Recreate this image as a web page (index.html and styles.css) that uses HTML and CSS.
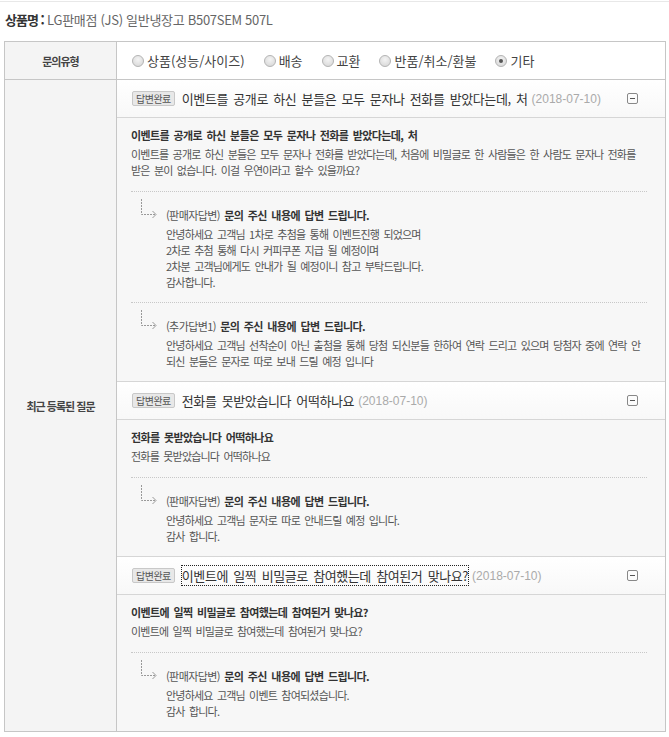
FILE: index.html
```html
<!DOCTYPE html>
<html lang="ko">
<head>
    <meta charset="UTF-8">
    <title>상품 문의</title>
    <link rel="stylesheet" href="styles.css">
</head>
<body>
    <div class="topline"></div>
    <div class="product"><b>상품명 :</b> LG판매점 (JS) 일반냉장고 B507SEM 507L</div>

    <table class="qna">
        <tr class="type-row">
            <th>문의유형</th>
            <td>
                <div class="radios">
                    <label class="radio"><span class="dot"></span>상품(성능/사이즈)</label>
                    <label class="radio"><span class="dot"></span>배송</label>
                    <label class="radio"><span class="dot"></span>교환</label>
                    <label class="radio"><span class="dot"></span>반품/취소/환불</label>
                    <label class="radio"><span class="dot on"></span>기타</label>
                </div>
            </td>
        </tr>
        <tr>
            <th>최근 등록된 질문</th>
            <td class="list">
                <!-- 질문 1 -->
                <div class="item">
                    <div class="head">
                        <span class="badge">답변완료</span>
                        <a class="title">이벤트를 공개로 하신 분들은 모두 문자나 전화를 받았다는데, 처</a>
                        <span class="date">(2018-07-10)</span>
                        <span class="fold"></span>
                    </div>
                    <div class="body">
                        <div class="q-title">이벤트를 공개로 하신 분들은 모두 문자나 전화를 받았다는데, 처</div>
                        <div class="q-text">이벤트를 공개로 하신 분들은 모두 문자나 전화를 받았다는데, 처음에 비밀글로 한 사람들은 한 사람도 문자나 전화를 받은 분이 없습니다. 이걸 우연이라고 할수 있을까요?</div>
                        <div class="reply">
                            <svg class="arrow" width="18" height="19" viewBox="0 0 18 19"><path d="M1.5 0V15.5H16" fill="none" stroke="#999" stroke-dasharray="2 1"/><path d="M12.5 12L16 15.5L12.5 19" fill="none" stroke="#999"/></svg>
                            <div class="r-text">
                                <div class="r-title"><span>(판매자답변)</span> 문의 주신 내용에 답변 드립니다.</div>
                                안녕하세요 고객님 1차로 추첨을 통해 이벤트진행 되었으며<br>
                                2차로 추첨 통해 다시 커피쿠폰 지급 될 예정이며<br>
                                2차분 고객님에게도 안내가 될 예정이니 참고 부탁드립니다.<br>
                                감사합니다.
                            </div>
                        </div>
                        <div class="reply">
                            <svg class="arrow" width="18" height="19" viewBox="0 0 18 19"><path d="M1.5 0V15.5H16" fill="none" stroke="#999" stroke-dasharray="2 1"/><path d="M12.5 12L16 15.5L12.5 19" fill="none" stroke="#999"/></svg>
                            <div class="r-text">
                                <div class="r-title"><span>(추가답변1)</span> 문의 주신 내용에 답변 드립니다.</div>
                                안녕하세요 고객님 선착순이 아닌 출첨을 통해 당첨 되신분들 한하여 연락 드리고 있으며 당첨자 중에 연락 안 되신 분들은 문자로 따로 보내 드릴 예정 입니다
                            </div>
                        </div>
                    </div>
                </div>

                <!-- 질문 2 -->
                <div class="item">
                    <div class="head">
                        <span class="badge">답변완료</span>
                        <a class="title">전화를 못받았습니다 어떡하나요</a>
                        <span class="date">(2018-07-10)</span>
                        <span class="fold"></span>
                    </div>
                    <div class="body">
                        <div class="q-title">전화를 못받았습니다 어떡하나요</div>
                        <div class="q-text">전화를 못받았습니다 어떡하나요</div>
                        <div class="reply">
                            <svg class="arrow" width="18" height="19" viewBox="0 0 18 19"><path d="M1.5 0V15.5H16" fill="none" stroke="#999" stroke-dasharray="2 1"/><path d="M12.5 12L16 15.5L12.5 19" fill="none" stroke="#999"/></svg>
                            <div class="r-text">
                                <div class="r-title"><span>(판매자답변)</span> 문의 주신 내용에 답변 드립니다.</div>
                                안녕하세요 고객님 문자로 따로 안내드릴 예정 입니다.<br>
                                감사 합니다.
                            </div>
                        </div>
                    </div>
                </div>

                <!-- 질문 3 -->
                <div class="item">
                    <div class="head">
                        <span class="badge">답변완료</span>
                        <a class="title focus">이벤트에 일찍 비밀글로 참여했는데 참여된거 맞나요?</a>
                        <span class="date">(2018-07-10)</span>
                        <span class="fold"></span>
                    </div>
                    <div class="body">
                        <div class="q-title">이벤트에 일찍 비밀글로 참여했는데 참여된거 맞나요?</div>
                        <div class="q-text">이벤트에 일찍 비밀글로 참여했는데 참여된거 맞나요?</div>
                        <div class="reply">
                            <svg class="arrow" width="18" height="19" viewBox="0 0 18 19"><path d="M1.5 0V15.5H16" fill="none" stroke="#999" stroke-dasharray="2 1"/><path d="M12.5 12L16 15.5L12.5 19" fill="none" stroke="#999"/></svg>
                            <div class="r-text">
                                <div class="r-title"><span>(판매자답변)</span> 문의 주신 내용에 답변 드립니다.</div>
                                안녕하세요 고객님 이벤트 참여되셨습니다.<br>
                                감사 합니다.
                            </div>
                        </div>
                    </div>
                </div>
            </td>
        </tr>
    </table>
</body>
</html>
```

FILE: styles.css
```css
body {
    margin: 0;
    background: #fff;
    font-family: "Noto Sans CJK KR", "Noto Sans", sans-serif;
    color: #555;
}
.topline {
    height: 1px;
    margin-top: 1px;
    background: #e8e8e8;
}
.product {
    padding: 8px 0 0 5px;
    height: 39px;
    box-sizing: border-box;
    font-size: 13px;
    letter-spacing: -0.3px;
    color: #666;
}
.product b {
    color: #333;
    letter-spacing: -1px;
}
.qna {
    margin-left: 4px;
    width: 662px;
    border-collapse: collapse;
    border: 1px solid #c6c6c6;
}
.qna th {
    width: 111px;
    background: #f4f4f4;
    border-right: 1px solid #c6c6c6;
    font-size: 11px;
    font-weight: bold;
    color: #444;
    letter-spacing: -1px;
    vertical-align: middle;
    padding: 0;
}
.qna td {
    padding: 0;
    vertical-align: top;
}
.type-row {
    height: 38px;
    border-bottom: 1px solid #c6c6c6;
}
.type-row td {
    vertical-align: middle;
}
.radios {
    display: flex;
    gap: 19px;
    padding-left: 15px;
    font-size: 13px;
    letter-spacing: 0;
    word-spacing: 2px;
    color: #444;
}
.radio {
    display: flex;
    align-items: center;
    gap: 3px;
}
.dot {
    width: 10px;
    height: 10px;
    border-radius: 50%;
    border: 1px solid #b5b5b5;
    background: radial-gradient(circle at 50% 35%, #f4f4f4, #d4d4d4);
    display: flex;
    align-items: center;
    justify-content: center;
}
.dot.on::after {
    content: "";
    width: 4px;
    height: 4px;
    border-radius: 50%;
    background: #555;
}
.item + .item {
    border-top: 1px solid #d6d6d6;
}
.head {
    height: 38px;
    box-sizing: border-box;
    display: flex;
    align-items: center;
    padding: 0 27px 0 15px;
    background: linear-gradient(#fff, #f8f8f8);
    border-bottom: 1px solid #d6d6d6;
}
.badge {
    font-size: 10px;
    line-height: 13px;
    padding: 0 3px;
    border: 1px solid #c8c8c8;
    border-radius: 2px;
    background: #e8e8e8;
    color: #555;
    letter-spacing: -0.5px;
    margin-right: 7px;
}
.title {
    font-size: 13px;
    letter-spacing: -0.4px;
    word-spacing: 2px;
    color: #333;
}
.title.focus {
    outline: 1px dotted #222;
}
.date {
    font-family: "Liberation Sans", Arial, sans-serif;
    font-size: 12px;
    color: #aaa;
    margin-left: 4px;
}
.fold {
    margin-left: auto;
    width: 9px;
    height: 9px;
    border: 1px solid #888;
    border-radius: 2px;
    display: flex;
    align-items: center;
    justify-content: center;
}
.fold::after {
    content: "";
    width: 5px;
    height: 1px;
    background: #555;
}
.body {
    background: #f7f7f7;
    padding: 9px 18px 12px 14px;
    font-size: 11px;
    line-height: 16px;
    letter-spacing: -0.8px;
    word-spacing: 2px;
    word-break: keep-all;
    color: #555;
}
.q-title {
    font-weight: bold;
    color: #333;
    letter-spacing: -0.6px;
    margin-bottom: 3px;
}
.q-text {
    margin-bottom: 13px;
}
.reply {
    display: flex;
    align-items: flex-start;
    border-top: 1px dotted #c8c8c8;
    padding: 7px 0 12px 9px;
}
.reply:last-child {
    padding-bottom: 0;
}
.arrow {
    flex: none;
    margin-right: 8px;
}
.r-text {
    padding-top: 8px;
}
.r-title {
    font-weight: bold;
    color: #333;
    letter-spacing: -0.6px;
    margin-bottom: 3px;
}
.r-title span {
    font-weight: normal;
    color: #555;
}
```
